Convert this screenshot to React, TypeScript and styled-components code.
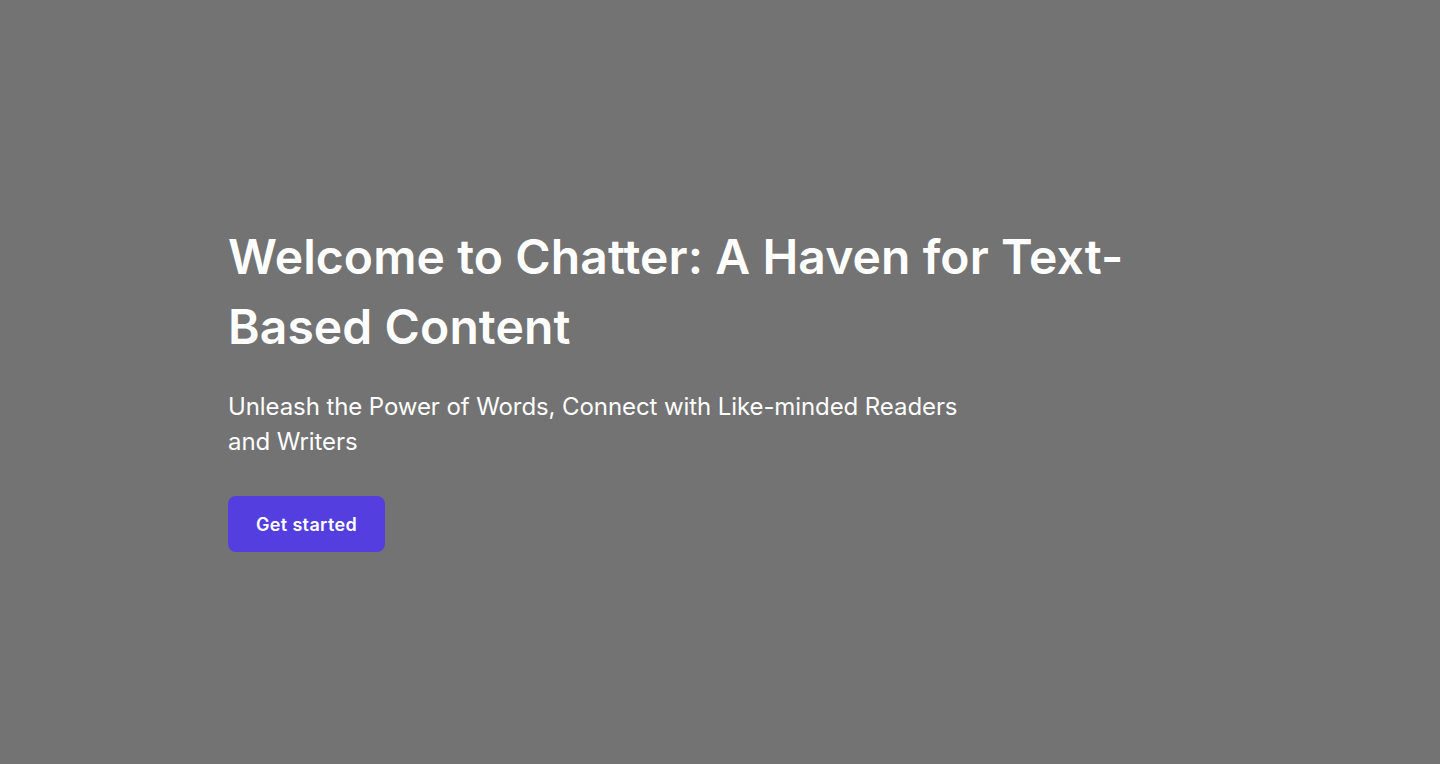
import React from "react";
import styled, { createGlobalStyle } from "styled-components";

const Global = createGlobalStyle`
  html, body { margin: 0; padding: 0; }
  body { background: #737373; font-family: Inter, "Noto Sans", sans-serif; }
`;

const Hero = styled.section`
  min-height: 764px;
  box-sizing: border-box;
  background: #737373;
  display: flex;
  flex-direction: column;
  justify-content: center;
  padding: 10px 228px 0;
`;

const Content = styled.div`
  display: flex;
  flex-direction: column;
  align-items: flex-start;
  max-width: 920px;
`;

const Title = styled.h1`
  margin: 0;
  color: #ffffff;
  font-size: 48px;
  font-weight: 600;
  line-height: 70px;
  letter-spacing: 0.1px;
`;

const Subtitle = styled.p`
  margin: 27px 0 0;
  max-width: 750px;
  color: #ffffff;
  font-size: 24px;
  font-weight: 400;
  line-height: 35px;
  letter-spacing: -0.09px;
`;

const Button = styled.button`
  margin-top: 37px;
  width: 157px;
  height: 56px;
  padding: 0;
  border: none;
  border-radius: 8px;
  background: #543ee0;
  color: #ffffff;
  font-family: inherit;
  font-size: 18px;
  font-weight: 600;
  letter-spacing: 0.35px;
  cursor: pointer;
`;

export default function App() {
  return (
    <>
      <Global />
      <Hero>
        <Content>
          <Title>Welcome to Chatter: A Haven for Text-Based Content</Title>
          <Subtitle>
            Unleash the Power of Words, Connect with Like-minded Readers and Writers
          </Subtitle>
          <Button>Get started</Button>
        </Content>
      </Hero>
    </>
  );
}
